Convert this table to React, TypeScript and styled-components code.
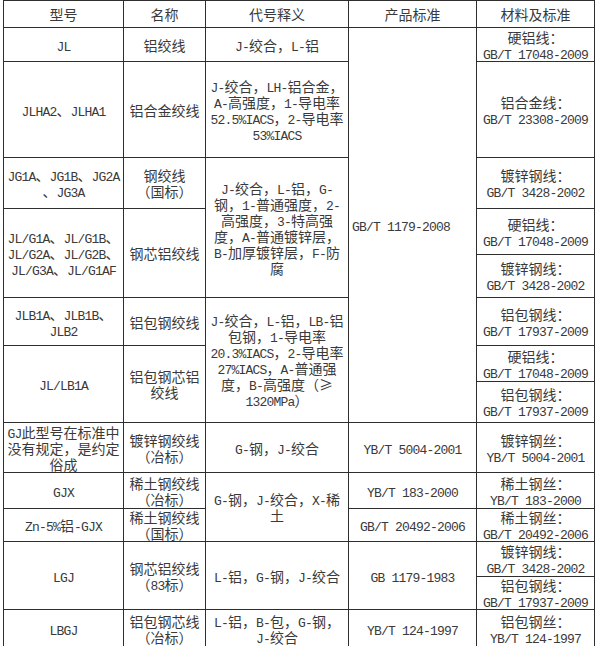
import React from 'react';
import styled, { createGlobalStyle } from 'styled-components';

const GlobalStyle = createGlobalStyle`
  html, body {
    margin: 0;
    padding: 0;
    background: #fff;
    overflow: hidden;
  }
  body {
    font-family: "Noto Sans CJK SC", sans-serif;
    color: #3a3a3a;
  }
`;

const Table = styled.table`
  margin-left: 3px;
  width: 591px;
  border-collapse: collapse;
  table-layout: fixed;
  font-size: 14px;
  line-height: 16px;
`;

const Col = styled.col<{ $w: number }>`
  width: ${(p) => p.$w}px;
`;

const Row = styled.tr<{ $h: number }>`
  height: ${(p) => p.$h}px;
`;

const Td = styled.td<{ $align?: 'left' | 'center' }>`
  border: 1px solid #2e2e2e;
  padding: 0 1px 0 ${(p) => (p.$align === 'left' ? 3 : 1)}px;
  text-align: ${(p) => p.$align ?? 'center'};
  vertical-align: middle;
  white-space: pre-line;
  overflow: hidden;
`;

const Th = styled.th`
  border: 1px solid #2e2e2e;
  padding: 0;
  font-weight: 400;
  text-align: center;
  vertical-align: middle;
`;

const Latin = styled.span`
  font-family: "Liberation Mono", monospace;
  font-size: 13px;
  line-height: 10px;
  letter-spacing: -0.8px;
`;

const Mixed = ({ text }: { text: string }) => {
  const parts = text.split(/([\x21-\x7E](?:[\x20-\x7E]*[\x21-\x7E])?)/);
  return (
    <>
      {parts.map((p, i) => (i % 2 ? <Latin key={i}>{p}</Latin> : p))}
    </>
  );
};

type CellProps = { text: string; span?: number; align?: 'left' | 'center' };

const Cell = ({ text, span, align }: CellProps) => (
  <Td rowSpan={span} $align={align}>
    <Mixed text={text} />
  </Td>
);

const headers = ['型号', '名称', '代号释义', '产品标准', '材料及标准'];

export default function App() {
  return (
    <>
      <GlobalStyle />
      <Table>
        <colgroup>
          <Col $w={120} />
          <Col $w={82} />
          <Col $w={143} />
          <Col $w={128} />
          <Col $w={118} />
        </colgroup>
        <thead>
          <Row $h={27}>
            {headers.map((h) => (
              <Th key={h}>{h}</Th>
            ))}
          </Row>
        </thead>
        <tbody>
          <Row $h={34}>
            <Cell text="JL" />
            <Cell text="铝绞线" />
            <Cell text="J-绞合，L-铝" />
            <Cell text="GB/T 1179-2008" span={8} align="left" />
            <Cell text={'硬铝线：\nGB/T 17048-2009'} />
          </Row>
          <Row $h={96}>
            <Cell text="JLHA2、JLHA1" />
            <Cell text="铝合金绞线" />
            <Cell text={'J-绞合，LH-铝合金，\nA-高强度，1-导电率\n52.5%IACS，2-导电率\n53%IACS'} />
            <Cell text={'铝合金线：\nGB/T 23308-2009'} />
          </Row>
          <Row $h={51}>
            <Cell text={'JG1A、JG1B、JG2A\n、JG3A'} />
            <Cell text={'钢绞线\n（国标）'} />
            <Cell
              text={'J-绞合，L-铝，G-\n钢，1-普通强度，2-\n高强度，3-特高强\n度，A-普通镀锌层，\nB-加厚镀锌层，F-防\n腐'}
              span={3}
            />
            <Cell text={'镀锌钢线：\nGB/T 3428-2002'} />
          </Row>
          <Row $h={46}>
            <Cell text={'JL/G1A、JL/G1B、\nJL/G2A、JL/G2B、\nJL/G3A、JL/G1AF'} span={2} />
            <Cell text="钢芯铝绞线" span={2} />
            <Cell text={'硬铝线：\nGB/T 17048-2009'} />
          </Row>
          <Row $h={43}>
            <Cell text={'镀锌钢线：\nGB/T 3428-2002'} />
          </Row>
          <Row $h={48}>
            <Cell text={'JLB1A、JLB1B、\nJLB2'} />
            <Cell text="铝包钢绞线" />
            <Cell
              text={'J-绞合，L-铝，LB-铝\n包钢，1-导电率\n20.3%IACS，2-导电率\n27%IACS，A-普通强\n度，B-高强度（≥\n1320MPa）'}
              span={3}
            />
            <Cell text={'铝包钢线：\nGB/T 17937-2009'} />
          </Row>
          <Row $h={36}>
            <Cell text="JL/LB1A" span={2} />
            <Cell text={'铝包钢芯铝\n绞线'} span={2} />
            <Cell text={'硬铝线：\nGB/T 17048-2009'} />
          </Row>
          <Row $h={41}>
            <Cell text={'铝包钢线：\nGB/T 17937-2009'} />
          </Row>
          <Row $h={50}>
            <Cell text={'GJ此型号在标准中\n没有规定，是约定\n俗成'} />
            <Cell text={'镀锌钢绞线\n（冶标）'} />
            <Cell text="G-钢，J-绞合" />
            <Cell text="YB/T 5004-2001" />
            <Cell text={'镀锌钢丝：\nYB/T 5004-2001'} />
          </Row>
          <Row $h={36}>
            <Cell text="GJX" />
            <Cell text={'稀土钢绞线\n（冶标）'} />
            <Cell text={'G-钢，J-绞合，X-稀\n土'} span={2} />
            <Cell text="YB/T 183-2000" />
            <Cell text={'稀土钢丝：\nYB/T 183-2000'} />
          </Row>
          <Row $h={33}>
            <Cell text="Zn-5%铝-GJX" />
            <Cell text={'稀土钢绞线\n（国标）'} />
            <Cell text="GB/T 20492-2006" />
            <Cell text={'稀土钢丝：\nGB/T 20492-2006'} />
          </Row>
          <Row $h={35}>
            <Cell text="LGJ" span={2} />
            <Cell text={'钢芯铝绞线\n（83标）'} span={2} />
            <Cell text="L-铝，G-钢，J-绞合" span={2} />
            <Cell text="GB 1179-1983" span={2} />
            <Cell text={'镀锌钢线：\nGB/T 3428-2002'} />
          </Row>
          <Row $h={32}>
            <Cell text={'铝包钢线：\nGB/T 17937-2009'} />
          </Row>
          <Row $h={38}>
            <Cell text="LBGJ" />
            <Cell text={'铝包钢芯线\n（冶标）'} />
            <Cell text={'L-铝，B-包，G-钢，\nJ-绞合'} />
            <Cell text="YB/T 124-1997" />
            <Cell text={'铝包钢丝：\nYB/T 124-1997'} />
          </Row>
        </tbody>
      </Table>
    </>
  );
}
